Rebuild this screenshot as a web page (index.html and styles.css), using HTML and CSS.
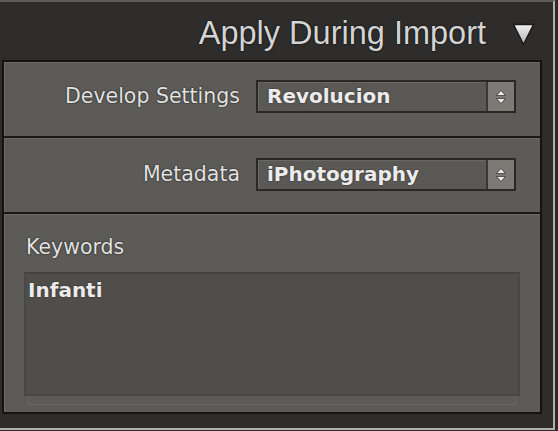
FILE: index.html
```html
<!DOCTYPE html>
<html>
<head>
<meta charset="utf-8">
<link rel="stylesheet" href="styles.css">
</head>
<body>
<div class="frame">
  <div class="header">
    <span class="title">Apply During Import</span>
    <svg class="disclosure" width="23" height="23" viewBox="0 0 23 23">
      <defs>
        <linearGradient id="tri" x1="0" y1="0" x2="0" y2="1">
          <stop offset="0" stop-color="#f2f2f2"/>
          <stop offset="1" stop-color="#b0b0b0"/>
        </linearGradient>
      </defs>
      <polygon points="1.5,1.5 21.5,1.5 11.5,21.5" fill="url(#tri)" stroke="#1a1918" stroke-width="1.5" stroke-linejoin="round"/>
    </svg>
  </div>
  <div class="panel">
    <div class="section row-section first">
      <span class="label">Develop Settings</span>
      <div class="select">
        <span class="value">Revolucion</span>
        <span class="stepper">
          <svg width="12" height="16" viewBox="0 0 12 16">
            <polygon points="6,1.5 10.5,6.5 1.5,6.5" fill="#ececec" stroke="#3a3835" stroke-width="0.8" stroke-linejoin="round"/>
            <polygon points="1.5,9.5 10.5,9.5 6,14.5" fill="#ececec" stroke="#3a3835" stroke-width="0.8" stroke-linejoin="round"/>
          </svg>
        </span>
      </div>
    </div>
    <div class="section row-section">
      <span class="label">Metadata</span>
      <div class="select">
        <span class="value">iPhotography</span>
        <span class="stepper">
          <svg width="12" height="16" viewBox="0 0 12 16">
            <polygon points="6,1.5 10.5,6.5 1.5,6.5" fill="#ececec" stroke="#3a3835" stroke-width="0.8" stroke-linejoin="round"/>
            <polygon points="1.5,9.5 10.5,9.5 6,14.5" fill="#ececec" stroke="#3a3835" stroke-width="0.8" stroke-linejoin="round"/>
          </svg>
        </span>
      </div>
    </div>
    <div class="section keywords">
      <span class="label kw-label">Keywords</span>
      <div class="textarea">Infanti</div>
      <div class="under"></div>
    </div>
  </div>
</div>
</body>
</html>
```

FILE: styles.css
```css
html, body {
  margin: 0;
  padding: 0;
  background: #2d2b29;
  width: 558px;
  height: 431px;
  overflow: hidden;
}

.frame {
  width: 553px;
  height: 426px;
  border-top: 2px solid #605e5b;
  border-right: 2px solid #b3b1ae;
  border-bottom: 2px solid #b3b1ae;
  background: #2f2d2b;
  display: flex;
  flex-direction: column;
}

.header {
  height: 58px;
  display: flex;
  align-items: center;
  justify-content: flex-end;
  padding-right: 18px;
  gap: 26px;
  box-sizing: border-box;
}

.title {
  font-family: "Liberation Sans", Arial, sans-serif;
  font-size: 32.5px;
  color: #d4d4d4;
  text-shadow: 0 0 2px #111, 0 0 1px #000;
  margin-top: 4px;
}

.disclosure {
  margin-top: 7px;
  display: block;
}

.panel {
  margin-left: 2px;
  width: 536px;
  height: 350px;
  border: 2px solid #151413;
  background: #5d5b57;
  display: flex;
  flex-direction: column;
}

.section {
  box-shadow: inset 1px 1px 0 #6c6a66;
  box-sizing: border-box;
}

.row-section {
  height: 76px;
  border-bottom: 2px solid #1a1918;
  display: grid;
  grid-template-columns: 1fr 260px;
  column-gap: 16px;
  align-items: start;
  padding: 18px 24px 0 0;
}

.row-section + .row-section {
  padding-top: 20px;
}

.label {
  font-family: "DejaVu Sans", sans-serif;
  font-size: 20.5px;
  color: #e2e2e2;
  text-shadow: 0 0 2px #2a2826, 0 0 1px #1c1b1a;
  text-align: right;
  line-height: 32px;
}

.select {
  height: 33px;
  box-sizing: border-box;
  border: 2px solid #2a2825;
  background: #5b5955;
  display: flex;
  align-items: stretch;
  box-shadow: inset 1px 1px 0 #6a6864;
}

.value {
  flex: 1;
  font-family: "DejaVu Sans", sans-serif;
  font-weight: bold;
  font-size: 20px;
  color: #ececec;
  text-shadow: 0 0 2px #2a2826;
  padding-left: 9px;
  line-height: 29px;
}

.stepper {
  width: 26px;
  border-left: 2px solid #3a3835;
  background: #7c7a75;
  display: flex;
  align-items: center;
  justify-content: center;
}

.stepper svg {
  display: block;
}

.keywords {
  flex: 1;
  padding: 20px 20px 0 20px;
  display: flex;
  flex-direction: column;
}

.kw-label {
  text-align: left;
  line-height: 26px;
  padding-left: 2px;
  height: 38px;
}

.textarea {
  height: 124px;
  box-sizing: border-box;
  border: 2px solid #4a4844;
  border-top-color: #44423e;
  background: #504e4a;
  font-family: "DejaVu Sans", sans-serif;
  font-weight: bold;
  font-size: 20px;
  color: #ebebeb;
  text-shadow: 0 0 2px #2a2826;
  padding: 3px 0 0 2px;
  line-height: 26px;
}

.under {
  height: 6px;
  margin: 2px 4px 0 4px;
  border-bottom: 1px solid #6a6864;
  border-left: 1px solid #686662;
  border-right: 1px solid #686662;
}
```
